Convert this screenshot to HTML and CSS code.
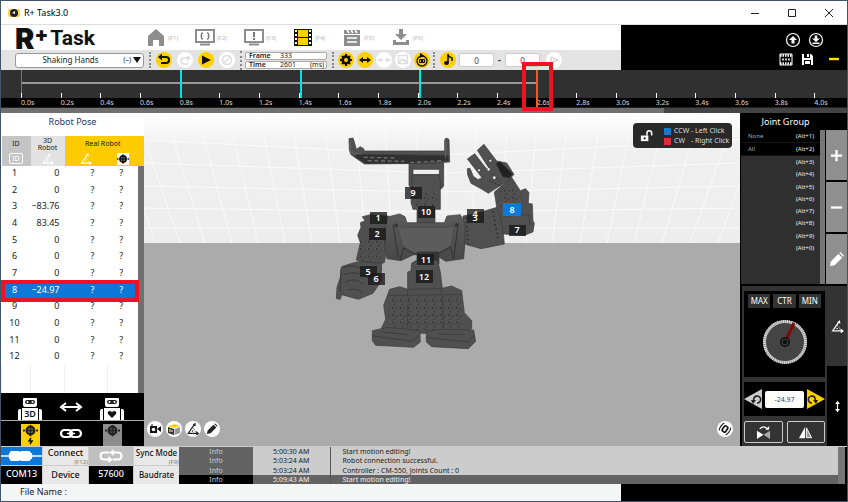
FILE: index.html
```html
<!DOCTYPE html>
<html lang="en">
<head>
<meta charset="utf-8">
<title>R+ Task3.0</title>
<link rel="stylesheet" href="styles.css">
</head>
<body>
<svg class="defs" aria-hidden="true">
  <defs>
    <symbol id="angle" viewBox="0 0 16 16"><path d="M13 13.500H2L10 2" fill="none" stroke="currentColor" stroke-width="1.500"/><path d="M12 10.500l4 3-4 3zM7.500 3L11 0l.5 4.500z" fill="currentColor"/><path d="M7.500 6.500q3 2 3.500 5" fill="none" stroke="currentColor" stroke-dasharray="1.500 1"/><circle cx="7.500" cy="10.500" r="1" fill="currentColor"/></symbol>
    <symbol id="servo" viewBox="0 0 16 16"><circle cx="8" cy="8" r="4" fill="none" stroke="currentColor" stroke-width="2.600"/><path d="M8 2v12M4 8h8" stroke="currentColor" stroke-width="2"/><path d="M0 7h2v2H0zM14 7h2v2h-2z" fill="currentColor"/></symbol>
    <symbol id="film" viewBox="0 0 18 17"><path d="M0 0h18v17H0z" fill="#111"/><path d="M4 1h10v7H4zM4 9h10v7H4z" fill="#ffd000"/><path d="M2 1v15M16 1v15" stroke="#fff" stroke-width="2" stroke-dasharray="2 2"/></symbol>
    <symbol id="pencil" viewBox="0 0 16 16"><path d="M1 15l1-5 8-8 4 4-8 8zM11 1l1-1 4 4-1 1z" fill="currentColor"/></symbol>
    <symbol id="robot" viewBox="0 0 26 23"><path d="M7 1h12q1 0 1 1v6q0 2-2 2H8q-2 0-2-2V2q0-1 1-1z" fill="#fff"/><rect x="8" y="3" width="10" height="4" rx="2" fill="#222"/><circle cx="10.500" cy="5" r="1" fill="#fff"/><circle cx="15.500" cy="5" r="1" fill="#fff"/><path d="M1 23V14q0-2 2-2h1v11zM5 23V11h16v12zM22 23V12h1q2 0 2 2v9z" fill="#fff"/></symbol>
    <pattern id="holes" width="24" height="22" patternUnits="userSpaceOnUse"><circle cx="5" cy="5" r="2.400" fill="#282828"/><circle cx="17" cy="9" r="2" fill="#303030"/><circle cx="10" cy="17" r="2" fill="#303030"/></pattern>
    <linearGradient id="wall" x2="0" y2="1"><stop stop-color="#fff"/><stop offset=".25" stop-color="#f0f0f0"/><stop offset="1" stop-color="#ededed"/></linearGradient>
    <linearGradient id="torso" x2="0" y2="1"><stop stop-color="#5a5a5a"/><stop offset="1" stop-color="#484848"/></linearGradient>
  </defs>
</svg>
<div class="app">
  <header class="titlebar">
    <svg class="app-icon" viewBox="0 0 12 10"><rect y="1" width="12" height="8" rx="2" fill="#ffd34a"/><circle cx="6" cy="5" r="4" fill="#222"/><path d="M4 5l3-2v3z" fill="#fff"/></svg>
    <span class="app-title">R+ Task3.0</span>
    <div class="window-buttons">
      <button aria-label="Minimize"><svg viewBox="0 0 10 10"><path d="M1 5.500h8" /></svg></button>
      <button aria-label="Maximize"><svg viewBox="0 0 10 10"><path d="M1.500 1.500h7v7h-7z"/></svg></button>
      <button aria-label="Close"><svg viewBox="0 0 10 10"><path d="M1 1l8 8M9 1L1 9"/></svg></button>
    </div>
  </header>

  <div class="top">
    <div class="top-left">
      <nav class="menu">
        <div class="logo"><b class="logo-r">R</b><b class="logo-plus">+</b><b class="logo-task">Task</b></div>
        <a href="#"><svg viewBox="0 0 20 17"><path d="M10 0l8 7v10h-5v-6H7v6H2V7z" fill="#8d8d8d"/></svg><span>(F1)</span></a>
        <a href="#"><svg viewBox="0 0 20 17"><path d="M1 1h18v12H1zM5 15.500h10" fill="none" stroke="#8d8d8d" stroke-width="2"/><path d="M8 4q-2 0-1.500 1.500T5.500 7q1.500 0 1 1.500T8 10M12 4q2 0 1.500 1.500T14.500 7q-1.500 0-1 1.500T12 10" fill="none" stroke="#777" stroke-width="1.300"/></svg><span>(F2)</span></a>
        <a href="#"><svg viewBox="0 0 20 17"><path d="M1 1h18v12H1zM5 15.500h10" fill="none" stroke="#8d8d8d" stroke-width="2"/><path d="M10 3v5M10 9v2" stroke="#777" stroke-width="2"/></svg><span>(F3)</span></a>
        <a href="#"><svg viewBox="0 0 18 17"><use href="#film"/></svg><span>(F4)</span></a>
        <a href="#"><svg viewBox="0 0 20 17"><path d="M2 6h16v11H2zM2 1h16v4H2z" fill="#8d8d8d"/><path d="M5 1l2 3M9 1l2 3M13 1l2 3M5 9h10M5 13h10" stroke="#fff" stroke-width="1.600"/></svg><span>(F5)</span></a>
        <a href="#"><svg viewBox="0 0 20 17"><path d="M8 0h4v5h4l-6 6-6-6h4zM2 11h3v2h10v-2h3v5H2z" fill="#8d8d8d"/></svg><span>(F6)</span></a>
      </nav>
      <div class="toolbar">
        <div class="motion">
          <select aria-label="Motion"><option>Shaking Hands</option></select>
          <span class="motion-extra">(–) <i></i></span>
        </div>
        <div class="tools">
          <button class="round on" aria-label="Undo"><svg viewBox="0 0 16 16"><path d="M5 5h5q3 0 3 3t-3 3H5" fill="none" stroke="#111" stroke-width="2"/><path d="M2 5l4-3.500v7z" fill="#111"/></svg></button>
          <button class="round" aria-label="Redo"><svg viewBox="0 0 16 16"><path d="M11 6H7q-3 0-3 3t3 3h4" fill="none" stroke="#ddd" stroke-width="1.500"/><path d="M14 6l-4-3v6z" fill="#ddd"/></svg></button>
          <button class="round on" aria-label="Play"><svg viewBox="0 0 16 16"><path d="M4 3.500l9 4.500-9 4.500z" fill="#111"/></svg></button>
          <button class="round" aria-label="Stop"><svg viewBox="0 0 16 16"><circle cx="8" cy="8" r="4.500" fill="none" stroke="#ddd" stroke-width="1.500"/><path d="M5 11l6-6" stroke="#ddd" stroke-width="1.500"/></svg></button>
        </div>
        <dl class="frame">
          <div><dt>Frame</dt><dd>333</dd><dd class="unit"></dd></div>
          <div><dt>Time</dt><dd>2601</dd><dd class="unit">(ms)</dd></div>
        </dl>
        <div class="tools edit">
          <button class="round on" aria-label="Settings"><svg viewBox="0 0 16 16"><circle cx="8" cy="8" r="3.300" fill="none" stroke="#111" stroke-width="2.800"/><path d="M8 2v12M2 8h12M4 4l8 8M12 4l-8 8" stroke="#111" stroke-width="2"/><circle cx="8" cy="8" r="2" fill="#ffd000"/></svg></button>
          <button class="round on" aria-label="Stretch"><svg viewBox="0 0 16 16"><path d="M4 8h8" stroke="#111" stroke-width="2"/><path d="M2 8l4-3v6zM14 8l-4-3v6z" fill="#111"/></svg></button>
          <button class="round" aria-label="Shrink"><svg viewBox="0 0 16 16"><path d="M1 8h4M11 8h4" stroke="#ddd" stroke-width="1.500"/><path d="M7 8L4 5.500v5zM9 8l3-2.500v5z" fill="#ddd"/></svg></button>
          <button class="round" aria-label="Image"><svg viewBox="0 0 16 16"><path d="M3.500 3.500h9v8h-9zM4 11l3-4 2 2 1-1 2 3" fill="none" stroke="#ddd" stroke-width="1.300"/></svg></button>
          <button class="round on" aria-label="Robot"><svg viewBox="0 0 16 16"><circle cx="8" cy="9" r="5" fill="none" stroke="#111" stroke-width="1.300"/><path d="M6 1l4 2.500L6 6z" fill="#111"/><rect x="5" y="7" width="6" height="4" rx="1" fill="#111"/><path d="M6 9h1M9 9h1" stroke="#ffd000" stroke-width="1.500"/></svg></button>
        </div>
        <div class="tools music">
          <button class="round on" aria-label="Music"><svg viewBox="0 0 16 16"><path d="M8 2v9M8 3q1 2 4 3v3" fill="none" stroke="#111" stroke-width="1.600"/><ellipse cx="6.500" cy="11" rx="2.500" ry="2" fill="#111"/></svg></button>
          <input aria-label="Music start" value="0"><b>-</b><input aria-label="Music end" value="0">
          <button class="round" aria-label="Play music"><svg viewBox="0 0 16 16"><path d="M5 5l7 3-7 3z" fill="#eee" stroke="#ccc"/></svg></button>
        </div>
      </div>
    </div>
    <div class="top-right">
      <div class="file-row">
        <button aria-label="Upload"><svg viewBox="0 0 16 16"><circle cx="8" cy="8" r="6.500" fill="none" stroke="#fff" stroke-width="1.200"/><path d="M8 4l4 4h-2.500v3.500h-3V8H4z" fill="#fff"/></svg></button>
        <button aria-label="Download"><svg viewBox="0 0 16 16"><circle cx="8" cy="8" r="6.500" fill="none" stroke="#fff" stroke-width="1.200"/><path d="M6.700 3.500h2.600v3H12L8 10 4 6.500h2.700zM4.500 10.500h7V12h-7z" fill="#fff"/></svg></button>
      </div>
      <div class="file-row second">
        <button aria-label="Motion list"><svg viewBox="0 0 16 16"><path d="M2 3h12v11H2z" fill="none" stroke="#fff"/><path d="M2 4.500h12M2 12.500h12" stroke="#fff" stroke-width="2.500" stroke-dasharray="1.500 1"/><path d="M4 8.500h8" stroke="#ccc" stroke-width="2" stroke-dasharray="2 1"/></svg></button>
        <button aria-label="Save"><svg viewBox="0 0 16 16"><path d="M3 3h9l2 2v9H3z" fill="#fff"/><path d="M5 3h6v4H5zM5 9h7v5H5z" fill="#000"/><path d="M8 3h2v3H8zM6 10h5v3H6z" fill="#fff"/></svg></button>
        <button aria-label="Collapse"><svg viewBox="0 0 16 16"><path d="M3 8h10" stroke="#ffe100" stroke-width="2.400"/></svg></button>
      </div>
    </div>
  </div>

  <section class="timeline" aria-label="Timeline">
    <div class="range"><span class="track"></span><i class="key k1"></i><i class="key k2"></i><i class="key k3"></i><i class="playhead"></i></div>
    <ol class="ticks">
      <li>0.0s</li><li>0.2s</li><li>0.4s</li><li>0.6s</li><li>0.8s</li><li>1.0s</li><li>1.2s</li><li>1.4s</li><li>1.6s</li><li>1.8s</li><li>2.0s</li><li>2.2s</li><li>2.4s</li><li>2.6s</li><li>2.8s</li><li>3.0s</li><li>3.2s</li><li>3.4s</li><li>3.6s</li><li>3.8s</li><li>4.0s</li>
    </ol>
    <div class="h-scroll"><span></span></div>
    <span class="mark time-mark"></span>
  </section>

  <main class="work">
    <section class="pose">
      <h2>Robot Pose</h2>
      <div class="pose-body">
        <table>
          <thead>
            <tr><th class="c-id">ID</th><th class="c-3d">3D<br>Robot</th><th class="c-real" colspan="2">Real Robot</th></tr>
            <tr class="icons"><th class="c-id"><span class="id-box">ID</span></th><th class="c-3d"><svg><use href="#angle"/></svg></th><th class="c-real"><svg><use href="#angle"/></svg></th><th class="c-real"><svg class="servo"><use href="#servo"/></svg></th></tr>
          </thead>
          <tbody>
            <tr><td>1</td><td>0</td><td>?</td><td>?</td></tr>
            <tr><td>2</td><td>0</td><td>?</td><td>?</td></tr>
            <tr><td>3</td><td>−83.76</td><td>?</td><td>?</td></tr>
            <tr><td>4</td><td>83.45</td><td>?</td><td>?</td></tr>
            <tr><td>5</td><td>0</td><td>?</td><td>?</td></tr>
            <tr><td>6</td><td>0</td><td>?</td><td>?</td></tr>
            <tr><td>7</td><td>0</td><td>?</td><td>?</td></tr>
            <tr class="selected"><td>8<span class="mark row-mark"></span></td><td>−24.97</td><td>?</td><td>?</td></tr>
            <tr><td>9</td><td>0</td><td>?</td><td>?</td></tr>
            <tr><td>10</td><td>0</td><td>?</td><td>?</td></tr>
            <tr><td>11</td><td>0</td><td>?</td><td>?</td></tr>
            <tr><td>12</td><td>0</td><td>?</td><td>?</td></tr>
            <tr class="blank"><td></td><td></td><td></td><td></td></tr>
          </tbody>
        </table>
      </div>
      <div class="sync">
        <button aria-label="3D robot"><svg viewBox="0 0 26 23"><use href="#robot"/><text x="13" y="20" text-anchor="middle">3D</text></svg></button>
        <button aria-label="Transfer pose"><svg viewBox="0 0 26 23"><path d="M5 10h16" stroke="#fff" stroke-width="2"/><path d="M8 6l-5 4 5 4M18 6l5 4-5 4" fill="none" stroke="#fff" stroke-width="2"/></svg></button>
        <button aria-label="Real robot"><svg viewBox="0 0 26 23"><use href="#robot"/><path d="M13 21l-4-4q-1-3 2-3 1.500 0 2 1.500 .5-1.500 2-1.500 3 0 2 3z" fill="#111"/></svg></button>
      </div>
      <div class="sync servo-row">
        <button aria-label="Torque on"><svg viewBox="0 0 26 23"><path d="M4 1h19v22H4z" fill="#ffd000"/><use href="#servo" x="5" y="0" width="17" height="15"/><path d="M14 15l-2 3h3l-2 3" fill="none" stroke="#111" stroke-width="1.500"/></svg></button>
        <button aria-label="Link"><svg viewBox="0 0 26 23"><rect x="3" y="7" width="11" height="7" rx="3.500" fill="none" stroke="#fff" stroke-width="2.200"/><rect x="12" y="7" width="11" height="7" rx="3.500" fill="none" stroke="#fff" stroke-width="2.200"/><path d="M9 10.500h8" stroke="#fff" stroke-width="1.500"/></svg></button>
        <button aria-label="Torque off"><svg viewBox="0 0 26 23"><path d="M4 1h19v22H4z" fill="#8d8d8d"/><use href="#servo" x="5" y="0" width="17" height="15"/></svg></button>
      </div>
    </section>

    <section class="view" aria-label="3D view">
      <svg class="scene" viewBox="144 113 596 333" preserveAspectRatio="none">
        <rect x="144" y="113" width="596" height="130" fill="url(#wall)"/>
        <g stroke="#fafafa" stroke-width="1" fill="none">
          <path d="M144 140l298 15 298-15M144 163l298 10 298-10M144 186l298 6 298-6M144 208l298 4 298-4M144 228h596"/>
          <path d="M155 243L144 208M180 243l-36-105M205 243l-40-130M232 243l-35-130M258 243l-30-130M285 243l-26-130M312 243l-22-130M340 243l-17-130M366 243l-12-130M392 243l-8-130M420 243l-4-130M446 243V113M472 243l4-130M500 243l8-130M526 243l12-130M552 243l17-130M580 243l22-130M607 243l26-130M634 243l32-130M662 243l38-130M690 243l46-130M718 243l22-60"/>
        </g>
        <rect x="144" y="243" width="596" height="203" fill="#ababab"/>
        <g transform="translate(335 130) scale(.3333)" stroke="#383838" stroke-width="2" fill="#505050">
          <path d="M222 98h104v70l-6 8h-10v-38h-76v38h-6l-6-10z"/>
          <path d="M234 118h79v16h-79z" fill="#eee"/>
          <path d="M232 134h80l4 20v84h-16v45h-54v-45h-12l-6-20z"/>
          <path d="M236 190h72v40h-72z" fill="url(#holes)" stroke="none"/>
          <path d="M42 26l12-2 4 12 6 22 12-8 10 6 2 7H329V30l4-6 9 4 2 68-48 4-208 2-40-28-5-14z"/>
          <path d="M66 73l246 3 28 2v14l-122 8H92L60 80z" fill="#303030"/>
          <path d="M86 82l96 2M98 92l110 2M226 98l94-6" stroke="#707070" stroke-width="4" stroke-dasharray="12 8"/>
          <path d="M46 32v36l34 4M334 36l-3 50" fill="none" stroke="#707070"/>
          <path d="M82 260l24-6 54 4v70l-12 70-20 4-64-12 12-52-8-22 10-24-2-14 14-6z"/>
          <path d="M76 326l74-10-4 86-80-10z" fill="url(#holes)" stroke="none"/>
          <path d="M20 410l24-8 30-8 66 6-2 54-24 36-44 18-50-14-4 14-12-2 2-34 10-30z"/>
          <path d="M24 412q30-12 56 6l30 16M26 434q40-14 64 6l20 10M30 456q30-16 56 8M40 480q24-8 40 8M18 416l-2 72" fill="none" stroke-width="3"/>
          <path d="M384 258l36-6 66-20 14 16 8 94-70 14-36-10-16-6z"/>
          <path d="M398 270l88-26 12 90-60 6z" fill="#505050" stroke="none"/>
          <path d="M394 262l6 86M474 244l16 90" stroke="#222" stroke-width="4" stroke-dasharray="4 9"/>
          <path d="M478 186l52-44 26 40 16-6 10 12-2 32 12 2 2 50 4 8-4 26-26 10-62-4-12-64-8-12z"/>
          <path d="M482 186l44-36 36 62-6 30-62-10z" fill="url(#holes)" stroke="none"/>
          <path d="M508 258l74-4 2 30" fill="none"/>
          <path d="M460 190l-22-14-30-16-10-26-1-18 8-1 10 24 14 10 12-6-44-56 22-16 36 46 6-4-34-52 20-18 38 50 30 6 22 34-16 18z"/>
          <path d="M483 100l12-5 38 37-10 12-20-4z" fill="#202020"/>
          <path d="M462 152l40 18M470 130l30 30" stroke="#222" stroke-width="3" stroke-dasharray="4 6"/>
          <g fill="#f0f0f0" stroke="none"><circle cx="478" cy="143" r="4"/><circle cx="461" cy="118" r="4"/><circle cx="466" cy="92" r="3"/><circle cx="432" cy="121" r="3"/></g>
          <path d="M160 260l34-8 16 8 6 18h112l8-20 40-4 14 26v56l-4 50-54 8-30-20h-66l-38 18-42-6-6-42-2-54z" fill="url(#torso)"/>
          <path d="M186 288l26 4h124l22-6-8 58q-82 64-146 4z" fill="#5c5c5c" stroke="#464646"/>
          <path d="M196 388l10-34 36 18h66l38-20 10 34M174 284l16 98M370 280l-14 106" fill="none" stroke="#303030" stroke-width="3"/>
          <circle cx="183" cy="286" r="5" fill="#333"/><circle cx="365" cy="285" r="5" fill="#333"/>
          <path d="M246 366h66v36h-66z" fill="#353535"/>
          <path d="M230 400l12-8h66l8 34 6 50-104 12v-62l10-4z"/>
          <path d="M164 478l30-8 24 8 98-2 34-8 30 14 8 66 22 24v24l-30 14H160l-22-12 14-30-6-42z"/>
          <path d="M162 500h216l8 60-10 40H166l-10-40z" fill="url(#holes)" stroke="none"/>
          <path d="M162 496l214-2M220 500l-4 106M322 498l4 108M218 478v20M318 478v16" fill="none"/>
          <path d="M112 602l48-10 94 10 2 34-20 16-114-6-10-14zM274 604l40-6 102 2 6 34-22 22-110-6-16-14z"/>
          <path d="M112 618l120 16 24-20M274 622l124 14 22-20M140 606l80 8M310 612l80 2" fill="none" stroke="#333"/>
        </g>
        <g class="tags">
          <rect x="405" y="187" width="17" height="12"/><rect x="418" y="206" width="17" height="12"/><rect x="370" y="212" width="17" height="12"/><rect x="369" y="228" width="17" height="12"/><rect x="467" y="209" width="17" height="14"/><rect x="509" y="225" width="17" height="11"/><rect x="360" y="266" width="17" height="11"/><rect x="368" y="273" width="17" height="12"/><rect x="417" y="254" width="17" height="11"/><rect x="416" y="270" width="17" height="13"/>
          <rect class="active" x="503" y="203" width="18" height="13"/>
          <text x="413" y="196">9</text><text x="426" y="215">10</text><text x="378" y="221">1</text><text x="377" y="237">2</text><text x="475" y="217">4</text><text x="475" y="221">3</text><text x="512" y="213">8</text><text x="517" y="233">7</text><text x="368" y="275">5</text><text x="376" y="282">6</text><text x="426" y="263">11</text><text x="424" y="280">12</text>
        </g>
      </svg>
      <div class="legend">
        <svg viewBox="0 0 16 16"><path d="M2 8h8v6H2z" fill="#fff"/><path d="M8.500 8V5.500a2.500 2.500 0 0 1 5 0V8" fill="none" stroke="#fff" stroke-width="1.600"/><circle cx="6" cy="11" r="1.200" fill="#222"/></svg>
        <ul><li class="ccw"><span>CCW</span>- Left Click</li><li class="cw"><span>CW</span>- Right Click</li></ul>
      </div>
      <div class="view-tools">
        <button class="round" aria-label="Camera"><svg viewBox="0 0 16 16"><path d="M3 5h7v7H3zM10 8l4-3v6z" fill="#111"/><circle cx="6.500" cy="8.500" r="1.800" fill="#fff"/><path d="M4 4h2" stroke="#111"/></svg></button>
        <button class="round" aria-label="Cube"><svg viewBox="0 0 16 16"><path d="M2 5l7-2 5 2-6 2z" fill="#ffd000"/><path d="M2 6l6 2v6l-6-2z" fill="#333"/><path d="M8.500 8L14 6v6l-5.500 2z" fill="#999"/><path d="M4 8v3M6 9v2" stroke="#fff"/></svg></button>
        <button class="round" aria-label="Angle"><svg viewBox="-2 -2 20 20"><use href="#angle" width="16" height="16"/></svg></button>
        <button class="round" aria-label="Edit"><svg viewBox="-3 -3 22 22"><use href="#pencil" width="16" height="16"/></svg></button>
        <button class="round last" aria-label="Servo view"><svg viewBox="0 0 16 16"><g transform="rotate(35 8 8)" fill="none" stroke="#111"><rect x="6" y="5" width="4" height="6" rx="1" stroke-width="1.600"/><path d="M4 3.500q-2 4.500 0 9M12 3.500q2 4.500 0 9"/></g></svg></button>
      </div>
    </section>

    <aside class="side">
      <h2>Joint Group</h2>
      <div class="groups">
        <ul>
          <li class="dark"><span>None</span><kbd>(Alt+1)</kbd></li><li class="dark"><span>All</span><kbd>(Alt+2)</kbd></li><li><kbd>(Alt+3)</kbd></li><li><kbd>(Alt+4)</kbd></li><li><kbd>(Alt+5)</kbd></li><li><kbd>(Alt+6)</kbd></li><li><kbd>(Alt+7)</kbd></li><li><kbd>(Alt+8)</kbd></li><li><kbd>(Alt+9)</kbd></li><li><kbd>(Alt+0)</kbd></li>
        </ul>
        <div class="group-buttons">
          <button aria-label="Add"><svg viewBox="0 0 16 16"><path d="M8 2v12M2 8h12" stroke="#fff" stroke-width="2.400"/></svg></button>
          <button aria-label="Remove"><svg viewBox="0 0 16 16"><path d="M2 8h12" stroke="#fff" stroke-width="2.400"/></svg></button>
          <button aria-label="Rename"><svg viewBox="0 0 16 16"><use href="#pencil"/></svg></button>
        </div>
      </div>
      <div class="joint">
        <div class="joint-main">
          <div class="dial-box">
            <div class="presets"><button>MAX</button><button>CTR</button><button>MIN</button></div>
            <svg class="dial" viewBox="0 0 46 46"><circle cx="23" cy="23" r="20.500" fill="#444" stroke="#999" stroke-width="3"/><circle cx="23" cy="23" r="20.500" fill="none" stroke="#ddd" stroke-width="3" stroke-dasharray="1 1"/><path d="M24 21l8-17" stroke="#7c0808" stroke-width="3"/><circle cx="23" cy="23" r="5" fill="#111"/><circle cx="23" cy="23" r="3" fill="none" stroke="#444"/></svg>
          </div>
          <div class="stepper">
            <button aria-label="Counter-clockwise"><svg viewBox="0 0 18 20"><path d="M18 0v20L0 10z" fill="#ccc"/><path d="M10 12a3.500 3.500 0 1 1 3 2" fill="none" stroke="#222" stroke-width="1.600"/><path d="M7 11h5l-3 4z" fill="#222"/></svg></button>
            <input aria-label="Angle" value="-24.97">
            <button aria-label="Clockwise"><svg viewBox="0 0 18 20"><path d="M0 0v20l18-10z" fill="#ffd000"/><path d="M8 12a3.500 3.500 0 1 0-3 2" fill="none" stroke="#222" stroke-width="1.600"/><path d="M11 11H6l3 4z" fill="#222"/></svg></button>
          </div>
          <div class="mirror">
            <button aria-label="Swap"><svg viewBox="0 0 16 16"><path d="M1 6v9l7-4.500z" fill="#fff"/><path d="M15 6v9l-7-4.500z" fill="#aaa"/><path d="M4 4q4-4 8 0" fill="none" stroke="#fff" stroke-width="1.500"/><path d="M10 5h4V1z" fill="#fff"/></svg></button>
            <button aria-label="Mirror"><svg viewBox="0 0 16 16"><path d="M7.500 2v12H1z" fill="#fff"/><path d="M9 3l5.500 10.500H9z" fill="#999" stroke="#fff"/></svg></button>
          </div>
        </div>
        <div class="joint-tabs">
          <button class="current" aria-label="Angle mode"><svg viewBox="0 0 16 16"><use href="#angle"/></svg></button>
          <button aria-label="Position mode"><svg viewBox="0 0 16 16"><path d="M8 4v8" stroke="#fff" stroke-width="1.500"/><path d="M8 1l3 4H5zM8 15l3-4H5z" fill="#fff"/></svg></button>
        </div>
      </div>
    </aside>
  </main>

  <section class="bottom">
    <div class="conn">
      <div class="port"><svg viewBox="0 0 42 18" preserveAspectRatio="none"><path d="M0 9h42" stroke="#fff" stroke-width="1.300"/><path d="M10 4h9v10h-9l-2-3V7zM20 4h9l3 3v4l-3 3h-9z" fill="#fff"/><path d="M18 5h4v8h-4z" fill="#fff"/></svg></div>
      <button>Connect<small>(F12)</small></button>
      <div class="loop"><svg viewBox="0 0 28 16"><path d="M12 4H6q-4 0-4 4t4 4h6M16 12h6q4 0 4-4t-4-4h-8" fill="none" stroke="#fff" stroke-width="2.500"/><path d="M17 0v8l-5-4zM11 8v8l5-4z" fill="#fff"/></svg></div>
      <button class="small">Sync Mode<small>(F9)</small></button>
      <div class="value">COM13</div><button>Device</button><div class="value">57600</div><button class="small">Baudrate</button>
    </div>
    <table class="log">
      <tr><td>Info</td><td>5:00:30 AM</td><td>Start motion editing!</td></tr>
      <tr><td>Info</td><td>5:03:24 AM</td><td>Robot connection successful.</td></tr>
      <tr><td>Info</td><td>5:03:24 AM</td><td>Controller : CM-550, Joints Count : 0</td></tr>
      <tr class="picked"><td>Info</td><td>5:09:43 AM</td><td>Start motion editing!</td></tr>
    </table>
    <span class="v-scroll"></span>
  </section>
  <footer><span>File Name :</span><i></i></footer>
</div>
</body>
</html>
```
FILE: styles.css
```css
* { box-sizing: border-box; }
body { margin: 0; font-family: "Noto Sans", sans-serif; font-size: 9px; line-height: 12px; color: #222; background: #fff; }
button { font: inherit; color: inherit; padding: 0; border: 0; background: none; display: flex; align-items: center; justify-content: center; }
ul, ol, dl, dd, h2 { margin: 0; padding: 0; list-style: none; }
h2 { font-weight: 400; text-align: center; }
svg { display: block; }
.defs { position: absolute; width: 0; height: 0; }
.app { min-height: 100vh; display: flex; flex-direction: column; border: 1px solid #40556b; overflow: hidden; }

.titlebar { display: flex; align-items: center; height: 24px; border-bottom: 1px solid #ddd; padding-left: 7px; }
.app-icon { width: 12px; height: 10px; }
.app-title { font-size: 9px; margin-left: 4px; color: #000; }
.window-buttons { display: flex; margin-left: auto; }
.window-buttons button { width: 37px; height: 22px; }
.window-buttons svg { width: 10px; height: 10px; fill: none; stroke: #222; }

.top { display: flex; }
.top-left { flex: 1; min-width: 0; }
.top-right { width: 226px; background: #000; padding: 7px 10px 2px; }
.menu { display: flex; align-items: center; height: 25px; padding: 0 14px; }
.logo { display: flex; align-items: flex-start; width: 131px; height: 25px; color: #111; font-family: Inter, sans-serif; }
.logo-r { font-size: 29px; line-height: 28px; font-weight: 900; }
.logo-plus { font-size: 20px; line-height: 18px; font-weight: 900; }
.logo-task { font-family: Roboto, sans-serif; font-size: 21px; line-height: 27px; margin-left: 2px; }
.menu a { display: flex; align-items: center; gap: 2px; width: 49px; color: #bbb; font-size: 6px; text-decoration: none; }
.menu a svg { width: 20px; height: 17px; }
.toolbar { display: flex; align-items: center; height: 20px; padding-left: 14px; background: #e3e3e3; }
.motion { position: relative; width: 129px; }
.motion select { display: block; appearance: none; width: 100%; height: 15px; padding: 0 22px 0 4px; border: 1px solid #999; border-radius: 3px; background: #fff; font: 8px/12px "Noto Sans", sans-serif; text-align: center; color: #222; }
.motion-extra { position: absolute; right: 3px; top: 1px; display: flex; align-items: center; gap: 2px; font-size: 7px; pointer-events: none; }
.motion-extra i { border: 4px solid transparent; border-top: 6px solid #111; border-bottom: 0; }
.tools { display: flex; align-items: center; gap: 5px; margin-left: 5px; padding-left: 5px; border-left: 2px dotted #888; }
.round { width: 16px; height: 16px; border-radius: 50%; background: #fff; flex: none; }
.round.on { background: #ffd000; }
.round svg { width: 16px; height: 16px; }
.frame { margin-left: 5px; padding-left: 3px; border-left: 2px dotted #888; }
.frame div { display: flex; width: 82px; height: 8px; margin: 1px 0; padding-left: 3px; border: 1px solid #aaa; border-radius: 2px; background: #fff; font-size: 7px; line-height: 6px; }
.frame dt { width: 31px; font-weight: 600; }
.frame dd { width: 30px; }
.frame .unit { width: 16px; }
.edit { gap: 3px; padding-left: 4px; }
.music { gap: 3px; margin-left: 3px; }
.music input { width: 35px; height: 14px; border: 1px solid #ccc; border-radius: 2px; padding: 0; text-align: center; font: 8px/12px "Noto Sans", sans-serif; color: #345; }
.music b { width: 5px; text-align: center; }
.music button:last-child { margin-left: 3px; }
.file-row { display: flex; justify-content: flex-end; gap: 7px; margin-right: 13px; }
.file-row svg { width: 16px; height: 16px; }
.file-row.second { gap: 5px; margin: 3px -5px 0 0; }
.file-row.second button:last-child { margin-left: 6px; }

.timeline { position: relative; background: #303030; }
.range { position: relative; height: 23px; margin-left: 20px; border-left: 1px solid #777; }
.track { display: block; width: 62.5%; height: 2px; background: #999; position: relative; top: 12px; }
.key, .playhead { position: absolute; top: 0; width: 2px; height: 28px; background: #00e5e8; z-index: 1; }
.k1 { left: 19.2%; }
.k2 { left: 33.7%; }
.k3 { left: 48.1%; }
.playhead { left: 62.300%; height: 37px; background: #f15a24; }
.ticks { display: grid; grid-template-columns: repeat(21, 1fr); margin-right: -7px; padding-left: 20px; background: linear-gradient(#303030 5px, #000 5px); }
.ticks li { color: #ddd; font-size: 7px; line-height: 9px; }
.ticks li::before { content: ""; display: block; width: 1px; height: 5px; background: #fff; }
.h-scroll { height: 6px; background: #444; border-top: 1px solid #222; }
.h-scroll span { display: block; width: 78.400%; height: 5px; background: #707070; }
.mark { position: absolute; border: 4px solid #ee1320; z-index: 5; pointer-events: none; }
.time-mark { left: 61.600%; top: -8px; width: 31px; height: 49px; }

.work { flex: 1; display: flex; }
.pose { width: 143px; display: flex; flex-direction: column; background: #fff; }
.pose h2 { font-size: 9px; line-height: 16px; padding: 1px 0 6px; color: #1c355e; }
.pose-body { position: relative; flex: 1; padding-right: 6px; background: linear-gradient(#fdcb00 30px, #707070 30px); display: flex; }
.pose table { flex: 1; border-collapse: collapse; table-layout: fixed; background: #fff; font-size: 9px; line-height: 12px; }
.pose th { padding: 0; font-weight: 400; font-size: 7px; line-height: 7px; height: 15px; }
.pose th.c-real[colspan] { padding-left: 3px; }
.pose .icons th { height: 15px; }
.pose th svg { width: 12px; height: 12px; margin: auto; color: #fff; }
.pose th svg.servo { color: #111; background: #fff; }
.c-id { background: #c4c4c4; width: 29px; }
.c-3d { background: #e2e2e2; width: 34px; }
.c-real { background: #fdcb00; }
.id-box { border: 1px solid #fff; border-radius: 2px; color: #fff; padding: 0 2px; }
.pose td { height: 17px; padding: 0 0 4px; text-align: center; }
.pose tr:nth-child(3n) td { height: 16px; }
.pose td:nth-child(1) { padding-right: 3px; }
.pose td:nth-child(2) { text-align: right; padding-right: 5px; }
.pose td:nth-child(3) { padding-left: 13px; }
.pose td:nth-child(4) { padding-right: 3px; }
.pose .selected { position: relative; background: #0c78d8; color: #fff; }
.pose .blank td { height: auto; border-left: 1px solid #eee; }
.row-mark { left: -1px; top: -3px; width: 138px; height: 22px; }
.sync { display: flex; justify-content: space-between; height: 27px; padding: 3px 19px 0 16px; background: #000; }
.sync svg { width: 26px; height: 23px; }
.sync text { font: 600 9px "Noto Sans", sans-serif; fill: #111; }
.servo-row { height: 26px; padding-top: 2px; border-top: 1px solid #aaa; }

.view { position: relative; flex: 1; min-width: 0; background: #ababab; display: flex; flex-direction: column; justify-content: space-between; }
.scene { position: absolute; width: 100%; height: 100%; }
.tags rect { fill: #181818; fill-opacity: .78; }
.tags rect.active { fill: #0c78d8; fill-opacity: 1; }
.tags text { font: 600 9px "Noto Sans", sans-serif; fill: #fff; text-anchor: middle; }
.legend { position: relative; align-self: flex-end; display: flex; align-items: center; gap: 13px; margin: 10px 8px 0 0; padding: 3px 7px 3px 6px; border-radius: 4px; background: #292929; color: #ddd; font-size: 7px; line-height: 10px; width: 99px; height: 25px; }
.legend svg { width: 15px; height: 15px; flex: none; }
.legend ul { white-space: nowrap; }
.legend li { display: flex; }
.legend li::before { content: ""; width: 7px; height: 7px; margin: 2px 3px 0 -3px; background: #1c78c9; }
.legend .cw::before { background: #d23237; }
.legend span { width: 17px; }
.view-tools { position: relative; display: flex; gap: 3px; padding: 0 7px 9px 3px; }
.view-tools .last { margin-left: auto; }

.side { width: 107px; background: #000; color: #fff; display: flex; flex-direction: column; }
.side h2 { font-size: 9px; line-height: 17px; padding-right: 16px; }
.groups { flex: 1; display: flex; margin-left: 1px; background: #2f2f2f; }
.groups ul { flex: 1; border-right: 5px solid #777; }
.groups li { display: flex; justify-content: space-between; padding: 0 6px 0 7px; font-size: 6px; line-height: 12px; color: #aaa; }
.groups li:nth-child(4n) { line-height: 13px; }
.groups li.dark { background: #000; border-bottom: 1px solid #161616; line-height: 12px; }
.groups kbd { font: inherit; color: #eee; margin-left: auto; }
.group-buttons { display: flex; flex-direction: column; gap: 2px; width: 22px; padding-left: 1px; background: #000; }
.group-buttons button { flex: 1; background: #8f8f8f; }
.group-buttons svg { width: 15px; height: 15px; }
.joint { display: flex; border-top: 2px solid #000; margin-left: 2px; background: #333; }
.joint-main { flex: 1; padding: 5px 2px 3px; display: flex; flex-direction: column; gap: 5px; }
.dial-box { background: #000; padding: 3px 4px 12px; }
.presets { display: grid; grid-template-columns: 1fr 1fr 1fr; gap: 3px; }
.presets button { background: #333; font-size: 8px; line-height: 14px; }
.dial { width: 46px; height: 46px; margin: 11px auto 0; }
.stepper { display: flex; align-items: center; justify-content: space-between; background: #000; height: 34px; }
.stepper svg { width: 18px; height: 20px; }
.stepper input { width: 39px; height: 17px; border: 0; border-radius: 2px; padding: 0; text-align: center; font: 7px/12px "Noto Sans", sans-serif; color: #345; }
.mirror { display: flex; gap: 4px; }
.mirror button { flex: 1; height: 22px; border: 1px solid #ccc; border-radius: 2px; }
.mirror svg { width: 15px; height: 15px; }
.joint-tabs { width: 20px; display: flex; flex-direction: column; }
.joint-tabs button { flex: 1; background: #000; }
.joint-tabs .current { background: #333; }
.joint-tabs svg { width: 13px; height: 13px; }

.bottom { display: flex; height: 38px; border-top: 1px solid #ccc; background: #000; }
.conn { display: grid; grid-template-columns: 41px 45px 44px 45px; grid-auto-rows: 18px; gap: 1px; background: #ccc; font-size: 9px; font-weight: 500; }
.conn > * { overflow: hidden; }
.conn button { flex-direction: column; background: #e8e8e8; color: #111; line-height: 12px; }
.conn .small { font-size: 8px; }
.conn small { align-self: flex-end; font-size: 6px; line-height: 6px; color: #888; }
.port { background: #0c78d8; }
.port svg { width: 100%; height: 100%; }
.loop { background: #c0c0c0; display: flex; align-items: center; justify-content: center; }
.loop svg { width: 28px; height: 14px; }
.value { background: #000; color: #fff; text-align: center; line-height: 16px; }
.log { flex: 1; height: 37px; border-collapse: collapse; font-size: 7px; line-height: 9px; background: #ccc; }
.log td { padding: 0; height: 9px; text-align: center; width: 77px; }
.log td:first-child { background: #636363; color: #ccc; width: 74px; }
.log td:last-child { text-align: left; width: auto; padding-left: 12px; border-left: 1px solid #555; }
.log .picked { background: #636363; color: #eee; }
.log .picked td:first-child { background: #000; }
.v-scroll { width: 7px; margin-right: 2px; background: #777; }
footer { display: flex; background: #f4f5f5; font-size: 9px; line-height: 16px; height: 17px; }
footer span { flex: 1; padding-left: 19px; }
footer i { width: 226px; background: #000; }
```
